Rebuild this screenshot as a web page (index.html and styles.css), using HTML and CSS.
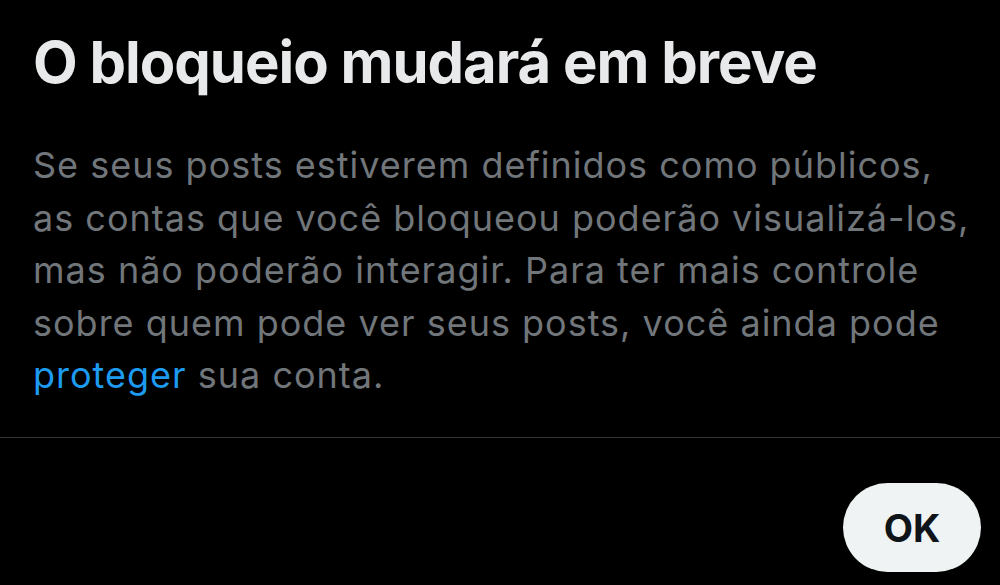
FILE: index.html
```html
<!DOCTYPE html>
<html lang="pt-BR">
<head>
  <meta charset="UTF-8">
  <title>O bloqueio mudará em breve</title>
  <link rel="stylesheet" href="styles.css">
</head>
<body>

  <div class="sheet">
    <div class="content">
      <h1>O bloqueio mudará em breve</h1>
      <p class="text">
        Se seus posts estiverem definidos como públicos,<br>
        as contas que você bloqueou poderão visualizá-los,<br>
        mas não poderão interagir. Para ter mais controle<br>
        sobre quem pode ver seus posts, você ainda pode<br>
        <a href="#">proteger</a> sua conta.
      </p>
    </div>

    <div class="actions">
      <button class="ok">OK</button>
    </div>
  </div>

</body>
</html>
```

FILE: styles.css
```css
body {
  margin: 0;
  background: #000;
  font-family: Inter, Roboto, sans-serif;
}

.sheet {
  height: 585px;
  display: flex;
  flex-direction: column;
}

.content {
  padding: 27px 33px 0;
  border-bottom: 1px solid #2f3336;
  height: 410px;
}

h1 {
  margin: 0;
  color: #e7e9ea;
  font-size: 58px;
  font-weight: 700;
  line-height: 70px;
  letter-spacing: -1px;
}

.text {
  margin: 42px 0 0;
  color: #71767b;
  font-size: 36px;
  line-height: 52.5px;
  letter-spacing: 1px;
  white-space: nowrap;
}

.text a {
  color: #1d9bf0;
  text-decoration: none;
}

.actions {
  display: flex;
  justify-content: flex-end;
  padding: 45px 19px 0;
}

.ok {
  width: 138px;
  height: 89px;
  border: none;
  border-radius: 45px;
  background: #eff3f4;
  color: #0f1419;
  font-family: Inter, Roboto, sans-serif;
  font-size: 38px;
  font-weight: 700;
}
```
